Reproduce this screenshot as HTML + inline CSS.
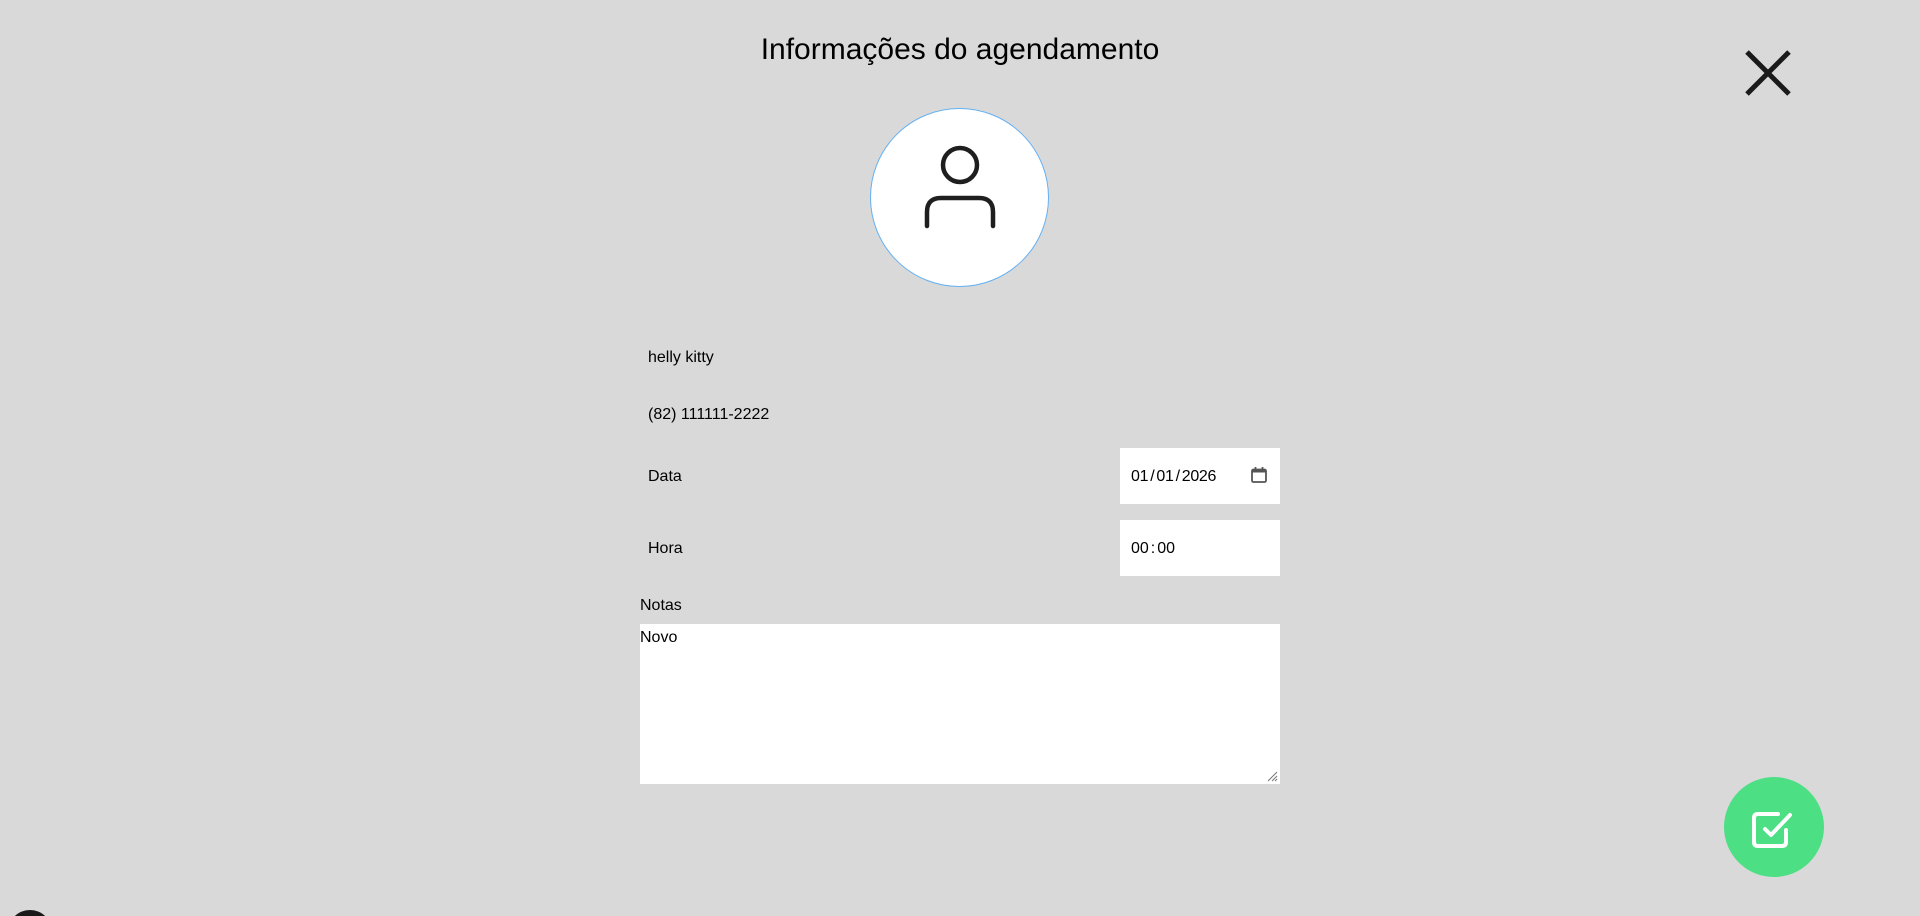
<!DOCTYPE html>
<html><head><meta charset="utf-8"><style>
html,body{margin:0;padding:0;width:1920px;height:916px;overflow:hidden;background:#d9d9d9;font-family:"Liberation Sans",Arial,sans-serif;color:#000;position:relative}
.a{position:absolute}
.t{font-size:16px;line-height:20px}
.inp{background:#fff;position:absolute}
</style></head><body>
<div class="a" style="left:0;width:1920px;top:32px;text-align:center;font-size:30px;line-height:36px">Informações do agendamento</div>
<svg class="a" style="left:1744px;top:49px" width="48" height="48" viewBox="0 0 48 48"><path d="M3 3L45 45M45 3L3 45" stroke="#1a1a1a" stroke-width="5" fill="none"/></svg>
<div class="a" style="left:870px;top:108px;width:177px;height:177px;border-radius:50%;background:#fff;border:1px solid #64b0f4"></div>
<svg class="a" style="left:910px;top:140px" width="100" height="100" viewBox="0 0 100 100"><circle cx="50" cy="25" r="17" stroke="#1f1f1f" stroke-width="4.5" fill="none"/><path d="M17 86V72Q17 58 31 58H69Q83 58 83 72V86" stroke="#1f1f1f" stroke-width="4.5" fill="none" stroke-linecap="round"/></svg>
<div class="a t" style="left:648px;top:348px">helly kitty</div>
<div class="a t" style="left:648px;top:405px">(82) 111111-2222</div>
<div class="a t" style="left:648px;top:467px">Data</div>
<div class="a t" style="left:648px;top:539px">Hora</div>
<div class="inp" style="left:1120px;top:448px;width:160px;height:56px"><div class="a t" style="left:11px;top:19px;letter-spacing:-0.3px">01<span style="margin:0 2px">/</span>01<span style="margin:0 2px">/</span>2026</div>
<svg class="a" style="left:130px;top:18px" width="18" height="18" viewBox="0 0 18 18"><rect x="2" y="3.5" width="14" height="12.5" rx="1.5" stroke="#555" stroke-width="1.8" fill="none"/><rect x="2" y="3.5" width="14" height="3" fill="#555"/><path d="M5.5 1v3M12.5 1v3" stroke="#555" stroke-width="1.8"/></svg></div>
<div class="inp" style="left:1120px;top:520px;width:160px;height:56px"><div class="a t" style="left:11px;top:19px">00<span style="margin:0 2px">:</span>00</div></div>
<div class="a t" style="left:640px;top:596px">Notas</div>
<div class="inp" style="left:640px;top:624px;width:640px;height:160px"><div class="a t" style="left:0;top:4px">Novo</div>
<svg class="a" style="right:2px;bottom:2px" width="12" height="12" viewBox="0 0 12 12"><path d="M11 2L2 11M11 6L6 11M11 9L9 11" stroke="#777" stroke-width="1"/></svg></div>
<div class="a" style="left:1724px;top:777px;width:100px;height:100px;border-radius:50%;background:#4cdf84"></div>
<svg class="a" style="left:1746px;top:799px" width="56" height="56" viewBox="0 0 56 56"><path d="M40 31V43Q40 47 36 47H12Q8 47 8 43V19Q8 15 12 15H32" stroke="#fff" stroke-width="4" fill="none" stroke-linecap="round"/><path d="M19 30L25 36L44 16" stroke="#fff" stroke-width="4" fill="none" stroke-linecap="round" stroke-linejoin="round"/></svg>
<div class="a" style="left:8px;top:910px;width:44px;height:44px;border-radius:50%;background:#1a1a1a"></div>
</body></html>
